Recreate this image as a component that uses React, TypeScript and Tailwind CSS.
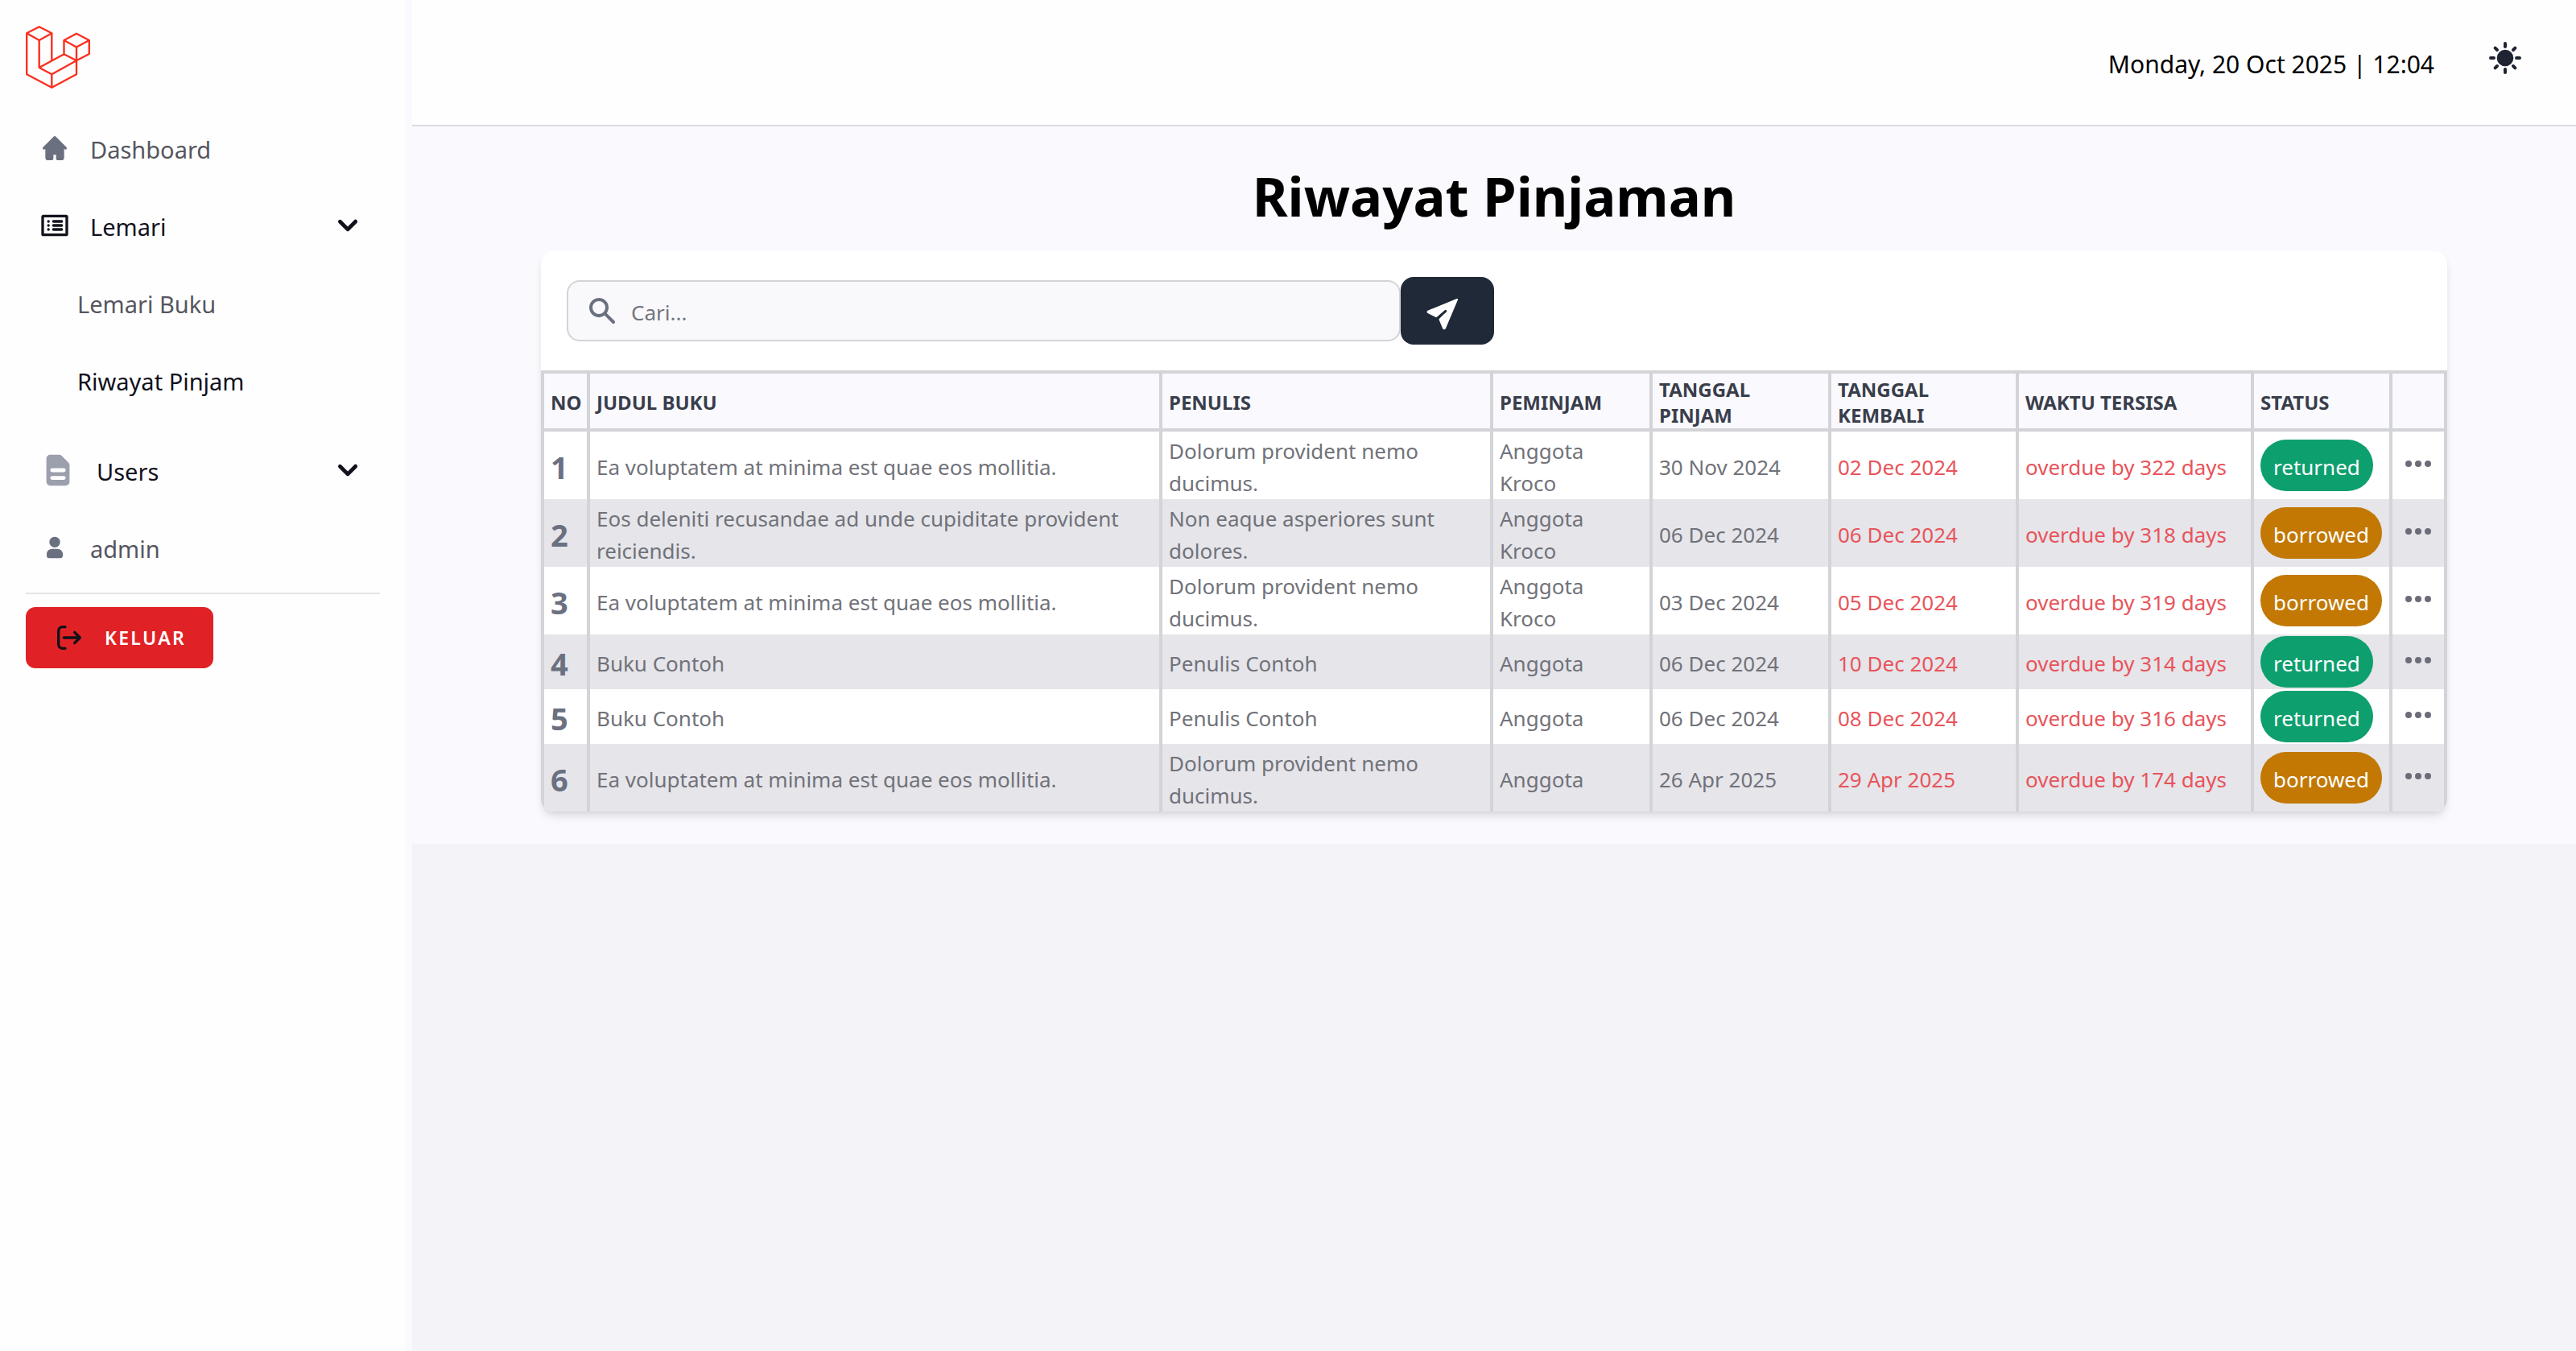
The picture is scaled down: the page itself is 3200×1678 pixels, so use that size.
import type { ReactNode } from "react";

type Status = "returned" | "borrowed";

interface Loan {
  title: string;
  author: string;
  borrower: string;
  borrowed: string;
  due: string;
  remaining: string;
  status: Status;
}

const loans: Loan[] = [
  { title: "Ea voluptatem at minima est quae eos mollitia.", author: "Dolorum provident nemo ducimus.", borrower: "Anggota\nKroco", borrowed: "30 Nov 2024", due: "02 Dec 2024", remaining: "overdue by 322 days", status: "returned" },
  { title: "Eos deleniti recusandae ad unde cupiditate provident reiciendis.", author: "Non eaque asperiores sunt\ndolores.", borrower: "Anggota\nKroco", borrowed: "06 Dec 2024", due: "06 Dec 2024", remaining: "overdue by 318 days", status: "borrowed" },
  { title: "Ea voluptatem at minima est quae eos mollitia.", author: "Dolorum provident nemo ducimus.", borrower: "Anggota\nKroco", borrowed: "03 Dec 2024", due: "05 Dec 2024", remaining: "overdue by 319 days", status: "borrowed" },
  { title: "Buku Contoh", author: "Penulis Contoh", borrower: "Anggota", borrowed: "06 Dec 2024", due: "10 Dec 2024", remaining: "overdue by 314 days", status: "returned" },
  { title: "Buku Contoh", author: "Penulis Contoh", borrower: "Anggota", borrowed: "06 Dec 2024", due: "08 Dec 2024", remaining: "overdue by 316 days", status: "returned" },
  { title: "Ea voluptatem at minima est quae eos mollitia.", author: "Dolorum provident nemo ducimus.", borrower: "Anggota", borrowed: "26 Apr 2025", due: "29 Apr 2025", remaining: "overdue by 174 days", status: "borrowed" },
];

const statusColor: Record<Status, string> = {
  returned: "bg-[#0e9f6e]",
  borrowed: "bg-[#c27803]",
};

const columns = [
  { label: "No", width: "w-[61px]" },
  { label: "Judul Buku", width: "" },
  { label: "Penulis", width: "w-[411px]" },
  { label: "Peminjam", width: "w-[198px]" },
  { label: "Tanggal\nPinjam", width: "w-[222px]" },
  { label: "Tanggal\nKembali", width: "w-[233px]" },
  { label: "Waktu Tersisa", width: "w-[292px]" },
  { label: "Status", width: "w-[172px]" },
  { label: "", width: "w-[68px]" },
];

function Logo() {
  return (
    <svg viewBox="0 0 80 78" className="h-[78px] w-20" fill="none" stroke="#f9301f" strokeWidth="2.4" strokeLinejoin="round" aria-label="Laravel">
      <path d="M1.2 9.3 16.7 1.2 32.3 9.3 16.7 18Z" />
      <path d="M1.2 9.3V60.3L32.3 76.8 63 60.3V26.5" />
      <path d="M16.7 18V52L32.3 60.3 63 43.3M32.3 60.3V76.8M32.3 9.3V43.3" />
      <path d="M16.7 52 47.5 35.3 63 43.3 78.8 35V18L63 9.7 47.5 18V35.3" />
      <path d="M47.5 18 63 26.5 78.8 18" />
    </svg>
  );
}

function HomeIcon() {
  return (
    <svg viewBox="0 0 24 24" className="size-10 shrink-0 text-[#6b7080]" fill="currentColor" aria-hidden="true">
      <path d="M11.293 3.293a1 1 0 0 1 1.414 0l6 6 2 2a1 1 0 0 1-1.414 1.414L19 12.414V19a2 2 0 0 1-2 2h-3a1 1 0 0 1-1-1v-3h-2v3a1 1 0 0 1-1 1H7a2 2 0 0 1-2-2v-6.586l-.293.293a1 1 0 0 1-1.414-1.414l2-2 6-6Z" />
    </svg>
  );
}

function ListIcon() {
  return (
    <svg viewBox="0 0 24 24" className="size-10 shrink-0" fill="none" stroke="currentColor" strokeWidth="2" strokeLinecap="round" strokeLinejoin="round" aria-hidden="true">
      <path d="M7.3 9h.01M7.3 12h.01M7.3 15h.01M11 9h6.2M11 12h6.2M11 15h6.2" />
      <rect x="3" y="5" width="18" height="14" rx="0.6" />
    </svg>
  );
}

function DocumentIcon() {
  return (
    <svg viewBox="0 0 20 20" className="size-12 shrink-0 text-[#9ca0ad]" fill="currentColor" aria-hidden="true">
      <path fillRule="evenodd" clipRule="evenodd" d="M4 4a2 2 0 012-2h4.586A2 2 0 0112 2.586L15.414 6A2 2 0 0116 7.414V16a2 2 0 01-2 2H6a2 2 0 01-2-2V4zm2 6a1 1 0 011-1h6a1 1 0 110 2H7a1 1 0 01-1-1zm1 3a1 1 0 100 2h6a1 1 0 100-2H7z" />
    </svg>
  );
}

function UserIcon() {
  return (
    <svg viewBox="0 0 24 24" className="size-10 shrink-0 text-[#6b7080]" fill="currentColor" aria-hidden="true">
      <path d="M12 4a4 4 0 1 0 0 8 4 4 0 0 0 0-8Zm-2 9a4 4 0 0 0-4 4v1a2 2 0 0 0 2 2h8a2 2 0 0 0 2-2v-1a4 4 0 0 0-4-4h-4Z" />
    </svg>
  );
}

function ChevronIcon() {
  return (
    <svg viewBox="0 0 20 20" className="ml-auto size-12 shrink-0" fill="currentColor" aria-hidden="true">
      <path fillRule="evenodd" clipRule="evenodd" d="M5.293 7.293a1 1 0 011.414 0L10 10.586l3.293-3.293a1 1 0 111.414 1.414l-4 4a1 1 0 01-1.414 0l-4-4a1 1 0 010-1.414z" />
    </svg>
  );
}

function LogoutIcon() {
  return (
    <svg viewBox="0 0 24 24" className="size-10 shrink-0 text-[#111118]" fill="none" stroke="currentColor" strokeWidth="2" strokeLinecap="round" strokeLinejoin="round" aria-hidden="true">
      <path d="M20 12H8m12 0-4 4m4-4-4-4M9 4H7a3 3 0 0 0-3 3v10a3 3 0 0 0 3 3h2" />
    </svg>
  );
}

function SunIcon() {
  return (
    <svg viewBox="0 0 40 40" className="size-10" fill="currentColor" stroke="currentColor" aria-hidden="true">
      <circle cx="20" cy="20" r="10.3" stroke="none" />
      <path strokeWidth="4" strokeLinecap="round" d="M20 2v4M20 34v4M2 20h4M34 20h4M7.6 7.6l2.4 2.4M30 30l2.4 2.4M7.6 32.4l2.4-2.4M30 10l2.4-2.4" />
    </svg>
  );
}

function SearchIcon() {
  return (
    <svg viewBox="0 0 20 20" className="size-10 shrink-0 text-[#6b7080]" fill="currentColor" aria-hidden="true">
      <path fillRule="evenodd" clipRule="evenodd" d="M8 4a4 4 0 100 8 4 4 0 000-8zM2 8a6 6 0 1110.89 3.476l4.817 4.817a1 1 0 01-1.414 1.414l-4.816-4.816A6 6 0 012 8z" />
    </svg>
  );
}

function SendIcon() {
  return (
    <svg viewBox="0 0 40 40" className="size-10" fill="white" stroke="white" strokeWidth="2" strokeLinejoin="round" aria-hidden="true">
      <path d="M38 2 2 16.6Q1 17.4 2 18.2L12.6 23.4 22.6 15.2Q24.6 14.2 25.4 15.8 25.8 17 24.8 18L16.6 26.8 21 37.6Q22 39 23 37.6Z" />
      <path d="M13.6 25.2 23.8 16.4" stroke="#1f2937" strokeWidth="3" strokeLinecap="round" />
    </svg>
  );
}

function DotsIcon() {
  return (
    <svg viewBox="0 0 32 8" className="h-2 w-8" fill="currentColor" aria-hidden="true">
      <circle cx="4" cy="4" r="4" />
      <circle cx="16" cy="4" r="4" />
      <circle cx="28" cy="4" r="4" />
    </svg>
  );
}

function NavLabel({ children }: { children: ReactNode }) {
  return <span className="pt-1 leading-[48px]">{children}</span>;
}

function Sidebar() {
  return (
    <aside className="flex w-[512px] shrink-0 bg-[#f9f9fe] pr-2">
      <div className="flex-1 bg-[#fefefe] p-8">
        <a href="#" className="flex h-20">
          <Logo />
        </a>
        <nav className="mt-8 border-b-2 border-[#e5e5e7] pb-4 text-[29px] text-[#55565f]">
          <ul className="flex flex-col gap-4">
            <li>
              <a href="#" className="flex h-20 items-center gap-6 px-4">
                <HomeIcon />
                <NavLabel>Dashboard</NavLabel>
              </a>
            </li>
            <li className="pb-4">
              <button type="button" aria-expanded="true" className="flex h-20 w-full items-center gap-6 px-4 text-[#12121c]">
                <ListIcon />
                <NavLabel>Lemari</NavLabel>
                <ChevronIcon />
              </button>
              <ul className="mt-4 flex flex-col gap-4">
                <li>
                  <a href="#" className="flex h-20 items-center pl-16">
                    <NavLabel>Lemari Buku</NavLabel>
                  </a>
                </li>
                <li>
                  <a href="#" aria-current="page" className="flex h-20 items-center pl-16 text-[#12121c]">
                    <NavLabel>Riwayat Pinjam</NavLabel>
                  </a>
                </li>
              </ul>
            </li>
            <li>
              <button type="button" aria-expanded="false" className="flex h-20 w-full items-center gap-6 px-4 text-[#12121c]">
                <DocumentIcon />
                <NavLabel>Users</NavLabel>
                <ChevronIcon />
              </button>
            </li>
            <li>
              <a href="#" className="flex h-20 items-center gap-6 px-4">
                <UserIcon />
                <NavLabel>admin</NavLabel>
              </a>
            </li>
          </ul>
        </nav>
        <button type="button" className="mt-4 flex h-[76px] items-center gap-6 rounded-xl border-2 border-[#e02226] bg-[#e02226] px-8 text-[23px] font-semibold tracking-widest text-white uppercase">
          <LogoutIcon />
          Keluar
        </button>
      </div>
    </aside>
  );
}

function SearchBar() {
  return (
    <form className="flex w-1/2 items-center" onSubmit={(e) => e.preventDefault()}>
      <label className="flex h-[76px] flex-1 items-center gap-4 rounded-2xl border-2 border-[#d4d4d8] bg-[#f9f9fc] px-[22px]">
        <SearchIcon />
        <input type="text" aria-label="Cari" placeholder="Cari..." className="w-full bg-transparent pt-1 text-[26px] text-gray-900 outline-none placeholder:text-[#73747c]" />
      </label>
      <button type="submit" aria-label="Cari buku" className="flex h-[84px] w-[116px] items-center rounded-2xl bg-[#1f2937] pt-2 pl-8">
        <SendIcon />
      </button>
    </form>
  );
}

function LoanTable() {
  const cell = "border-r-4 border-[#d3d4d8] px-2 pt-1 whitespace-pre-line";
  return (
    <table className="w-full table-fixed border-separate border-spacing-0 text-left text-[26px] leading-[40px] text-[#717279]">
      <thead className="text-[24px] leading-[32px] text-[#393e4b] uppercase">
        <tr className="bg-[#f9f9fe]">
          {columns.map(({ label, width }, i) => (
            <th key={i} scope="col" aria-label={label || "Aksi"} className={`border-y-4 border-r-4 border-[#d3d4d8] px-2 pt-1 font-bold whitespace-pre-line first:border-l-4 ${width}`}>
              {label}
            </th>
          ))}
        </tr>
      </thead>
      <tbody>
        {loans.map((loan, i) => (
          <tr key={i} className="bg-white even:bg-[#e5e5ea]">
            <th scope="row" className="border-x-4 border-[#d3d4d8] px-2 pt-1 text-[38px] leading-[56px] font-bold text-[#6b7080]">{i + 1}</th>
            <td className={cell}>{loan.title}</td>
            <td className={cell}>{loan.author}</td>
            <td className={cell}>{loan.borrower}</td>
            <td className={cell}>{loan.borrowed}</td>
            <td className={`${cell} text-[#e8545a]`}>{loan.due}</td>
            <td className={`${cell} text-[#e8545a]`}>{loan.remaining}</td>
            <td className="border-r-4 border-[#d3d4d8] px-2 py-0.5">
              <span className={`flex h-16 w-fit items-center rounded-full px-4 pt-1 text-white ${statusColor[loan.status]}`}>{loan.status}</span>
            </td>
            <td className="border-r-4 border-[#d3d4d8] pb-1">
              <button type="button" aria-label="Menu" className="mx-auto flex py-2 text-[#6b6c78]">
                <DotsIcon />
              </button>
            </td>
          </tr>
        ))}
      </tbody>
    </table>
  );
}

export default function App() {
  return (
    <div className="flex min-h-screen bg-[#f3f3f8] font-['Noto_Sans','Open_Sans',sans-serif]">
      <Sidebar />
      <div className="min-w-0 flex-1">
        <header className="flex h-[157px] items-center justify-end gap-12 border-b-2 border-[#dcdcde] bg-[#fefefe] pr-12">
          <time className="pt-1 text-[30px] leading-[48px] text-black">Monday, 20 Oct 2025 | 12:04</time>
          <button type="button" aria-label="Ganti tema" className="mt-8 self-start p-5 text-[#1f2433]">
            <SunIcon />
          </button>
        </header>
        <main className="bg-[#f9f9fe] px-40 pt-[46px] pb-10">
          <h1 className="mb-[29px] text-center text-[67px] leading-[80px] font-bold text-black">Riwayat Pinjaman</h1>
          <section className="overflow-hidden rounded-2xl bg-white shadow-[0_8px_12px_-2px_rgba(0,0,0,0.1),0_4px_8px_-4px_rgba(0,0,0,0.1)]">
            <div className="p-8">
              <SearchBar />
            </div>
            <LoanTable />
          </section>
        </main>
      </div>
    </div>
  );
}
